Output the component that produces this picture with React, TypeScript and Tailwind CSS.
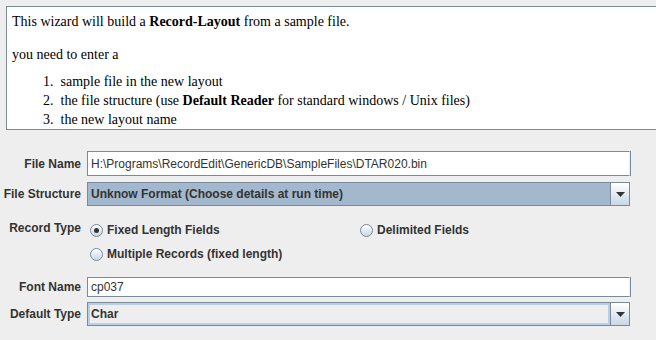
import React from "react";

function Radio({ checked, label }: { checked?: boolean; label: string }) {
  return (
    <div className="flex items-center gap-[4px]">
      <span className="flex h-[13px] w-[13px] items-center justify-center rounded-full border border-[#7a8a99] bg-gradient-to-b from-[#ffffff] to-[#c8d7e6]">
        {checked && <span className="h-[5px] w-[5px] rounded-full bg-[#333333]" />}
      </span>
      <span className="font-bold text-[12px] text-[#333333]">{label}</span>
    </div>
  );
}

function Combo({ text, selected }: { text: string; selected?: boolean }) {
  return (
    <div className="flex h-[24px] border border-[#7a8a99]">
      <div
        className={
          "flex flex-1 items-center border-2 pl-[1px] font-bold text-[12px] text-[#333333] " +
          (selected ? "border-[#a3b8cc] bg-[#a3b8cc]" : "border-[#b8cfe5] bg-[#eeeeee]")
        }
      >
        {text}
      </div>
      <div className="flex w-[19px] items-center justify-center border-l border-[#7a8a99] bg-gradient-to-b from-[#ffffff] to-[#c8d7e6]">
        <svg width="9" height="5" viewBox="0 0 9 5">
          <path d="M0 0h9L4.5 5z" fill="#333333" />
        </svg>
      </div>
    </div>
  );
}

function TextField({ value, h }: { value: string; h: string }) {
  return (
    <div className={"flex items-center border border-[#7a8a99] border-r-[#eeeeee] border-b-[#7a8a99] bg-white pl-[3px] text-[12px] text-[#333333] shadow-[inset_1px_1px_0_#ffffff,1px_0_0_#7a8a99] " + h}>
      {value}
    </div>
  );
}

export default function App() {
  return (
    <div className="h-[340px] w-[656px] overflow-hidden bg-[#eeeeee] font-['Liberation_Sans',Arial,sans-serif]">
      <div className="ml-[6px] mt-[6px] h-[124px] w-[660px] border border-r-0 border-[#7a8a99] bg-white pl-[5px] pt-[7px] font-['Liberation_Serif','Times_New_Roman',serif] text-[14px] leading-[16px] text-black">
        <p>
          This wizard will build a <b>Record-Layout</b> from a sample file.
        </p>
        <p className="mt-[17px]">you need to enter a</p>
        <ol className="mt-[11px] flex flex-col gap-[3px] pl-[31px]">
          <li>1.&nbsp; sample file in the new layout</li>
          <li>
            2.&nbsp; the file structure (use <b>Default Reader</b> for standard windows / Unix files)
          </li>
          <li>3.&nbsp; the new layout name</li>
        </ol>
      </div>

      <div className="mt-[21px] grid grid-cols-[81px_543px] gap-x-[6px] text-[12px] text-[#333333]">
        <div className="flex items-center justify-end font-bold">File Name</div>
        <TextField value="H:\Programs\RecordEdit\GenericDB\SampleFiles\DTAR020.bin" h="h-[25px]" />

        <div className="mt-[6px] flex items-center justify-end font-bold">File Structure</div>
        <div className="mt-[6px]">
          <Combo text="Unknow Format (Choose details at run time)" selected />
        </div>

        <div className="mt-[12px] flex justify-end pt-[1px] font-bold">Record Type</div>
        <div className="mt-[12px] flex flex-col">
          <div className="grid h-[24px] grid-cols-[270px_1fr] items-center pl-[3px]">
            <Radio checked label="Fixed Length Fields" />
            <Radio label="Delimited Fields" />
          </div>
          <div className="flex h-[24px] items-center pl-[3px]">
            <Radio label="Multiple Records (fixed length)" />
          </div>
        </div>

        <div className="mt-[11px] flex items-center justify-end font-bold">Font Name</div>
        <div className="mt-[11px]">
          <TextField value="cp037" h="h-[20px]" />
        </div>

        <div className="mt-[5px] flex items-center justify-end font-bold">Default Type</div>
        <div className="mt-[5px]">
          <Combo text="Char" />
        </div>
      </div>
    </div>
  );
}
